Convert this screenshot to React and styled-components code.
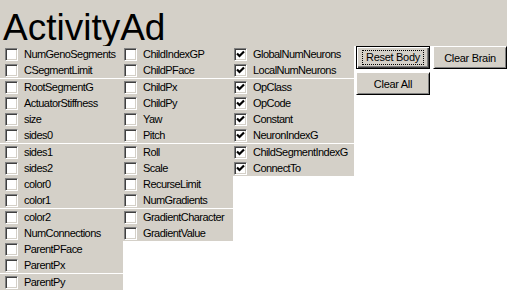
import React from "react";
import styled, { createGlobalStyle } from "styled-components";

const GlobalStyle = createGlobalStyle`
  body {
    margin: 0;
    background: #ffffff;
    font-family: "Liberation Sans", Arial, sans-serif;
  }
`;

const columns = [
  {
    width: 123,
    pad: 5,
    groups: [
      ["NumGenoSegments", "CSegmentLimit"],
      ["RootSegmentG", "ActuatorStiffness", "size", "sides0"],
      ["sides1", "sides2", "color0", "color1"],
      ["color2", "NumConnections", "ParentPFace", "ParentPx"],
      ["ParentPy"],
    ],
  },
  {
    width: 110,
    pad: 1,
    groups: [
      ["ChildIndexGP", "ChildPFace"],
      ["ChildPx", "ChildPy", "Yaw", "Pitch"],
      ["Roll", "Scale", "RecurseLimit", "NumGradients"],
      ["GradientCharacter", "GradientValue"],
    ],
  },
  {
    width: 121,
    pad: 1,
    checked: true,
    groups: [
      ["GlobalNumNeurons", "LocalNumNeurons"],
      ["OpClass", "OpCode", "Constant", "NeuronIndexG"],
      ["ChildSegmentIndexG", "ConnectTo"],
    ],
  },
];

const Page = styled.div`
  width: 507px;
`;

const TitleBar = styled.div`
  height: 46px;
  box-sizing: border-box;
  padding: 9px 0 0 3px;
  background: #d4d0c8;
  font-size: 37px;
  line-height: 37px;
  color: #000;
  white-space: nowrap;
`;

const Main = styled.div`
  display: flex;
  align-items: flex-start;
`;

const Column = styled.div`
  display: flex;
  flex-direction: column;
  gap: 1px;
  width: ${(p) => p.$width}px;
`;

const Group = styled.div`
  background: #d4d0c8;
`;

const Row = styled.label`
  display: flex;
  align-items: center;
  height: 16px;
  padding-left: ${(p) => p.$pad}px;
  font-size: 11px;
  letter-spacing: -0.55px;
  color: #000;
  white-space: nowrap;
`;

const Box = styled.span`
  width: 13px;
  height: 13px;
  box-sizing: border-box;
  flex: none;
  background: #fff;
  border-top: 1px solid #808080;
  border-left: 1px solid #808080;
  border-bottom: 1px solid #fff;
  border-right: 1px solid #fff;
  box-shadow: inset 1px 1px 0 #404040, inset -1px -1px 0 #d4d0c8;
  margin-right: 6px;
  display: flex;
  align-items: center;
  justify-content: center;
`;

const ButtonArea = styled.div`
  display: flex;
  flex-wrap: wrap;
  gap: 3px;
  width: 153px;
  padding-left: 2px;
  box-sizing: border-box;
`;

const Button = styled.button`
  width: 74px;
  height: 23px;
  padding: 0;
  background: #d4d0c8;
  font-family: "Liberation Sans", Arial, sans-serif;
  font-size: 11px;
  letter-spacing: -0.3px;
  color: #000;
  border: 1px solid ${(p) => (p.$default ? "#000" : "#fff")};
  border-right-color: #000;
  border-bottom-color: #000;
  box-shadow: ${(p) =>
    p.$default
      ? "inset 1px 1px 0 #fff, inset -1px -1px 0 #404040, inset -2px -2px 0 #808080"
      : "inset 1px 1px 0 #d4d0c8, inset -1px -1px 0 #808080"};
  display: flex;
  align-items: center;
  justify-content: center;
`;

const Focus = styled.span`
  border: 1px dotted #000;
  padding: 1px 3px;
  line-height: 11px;
`;

function Check({ checked }) {
  return (
    <Box>
      {checked && (
        <svg width="9" height="9" viewBox="0 0 9 9">
          <path d="M1 3.5 L3.5 6 L8 1.5" fill="none" stroke="#000" strokeWidth="2.2" />
        </svg>
      )}
    </Box>
  );
}

export default function App() {
  return (
    <Page>
      <GlobalStyle />
      <TitleBar>ActivityAd</TitleBar>
      <Main>
        {columns.map((col, i) => (
          <Column key={i} $width={col.width}>
            {col.groups.map((g, j) => (
              <Group key={j}>
                {g.map((name) => (
                  <Row key={name} $pad={col.pad}>
                    <Check checked={col.checked} />
                    {name}
                  </Row>
                ))}
              </Group>
            ))}
          </Column>
        ))}
        <ButtonArea>
          <Button $default>
            <Focus>Reset Body</Focus>
          </Button>
          <Button>Clear Brain</Button>
          <Button>Clear All</Button>
        </ButtonArea>
      </Main>
    </Page>
  );
}
